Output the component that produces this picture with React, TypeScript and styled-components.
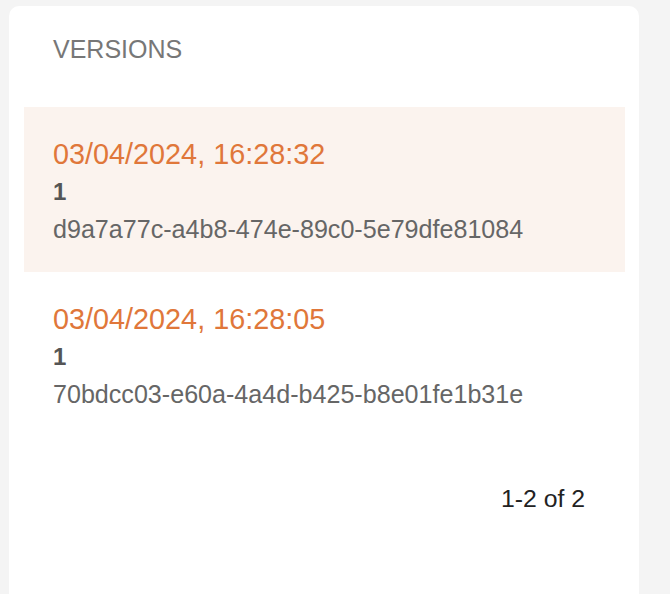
import { ReactElement } from 'react';
import styled, { createGlobalStyle } from 'styled-components';

interface Version {
  createdAt: string;
  number: number;
  id: string;
}

const versions: Version[] = [
  { createdAt: '03/04/2024, 16:28:32', number: 1, id: 'd9a7a77c-a4b8-474e-89c0-5e79dfe81084' },
  { createdAt: '03/04/2024, 16:28:05', number: 1, id: '70bdcc03-e60a-4a4d-b425-b8e01fe1b31e' },
];

const GlobalStyle = createGlobalStyle`
  html, body {
    margin: 0;
    background: #f4f4f4;
    font-family: "Liberation Sans", Arial, Helvetica, sans-serif;
    overflow: hidden;
  }
`;

const Page = styled.div`
  box-sizing: border-box;
  display: flex;
  height: 100vh;
  padding: 6px 0 0 9px;
`;
const Card = styled.div`
  background: #fff;
  border-radius: 10px 10px 0 0;
  box-sizing: border-box;
  padding: 28px 14px 0 15px;
  width: 630px;
`;
const Title = styled.div`
  color: #777;
  font-size: 25px;
  line-height: 30px;
  margin-bottom: 43px;
  padding-left: 29px;
`;
const List = styled.div`
  display: flex;
  flex-direction: column;
`;
const Row = styled.div<{ $active?: boolean }>`
  background: ${ (p) => (p.$active ? '#fbf3ee' : 'transparent') };
  box-sizing: border-box;
  display: flex;
  flex-direction: column;
  height: 165px;
  padding: 29px 29px 0;
`;
const Date = styled.div`
  color: #e0773a;
  font-size: 28.8px;
  line-height: 36px;
`;
const Number = styled.div`
  color: #555;
  font-size: 24px;
  font-weight: 700;
  line-height: 39px;
`;
const Id = styled.div`
  color: #666;
  font-size: 25.1px;
  line-height: 36px;
`;
const Pagination = styled.div`
  color: #222;
  display: flex;
  font-size: 24.8px;
  justify-content: flex-end;
  line-height: 30px;
  margin-top: 47px;
  padding-right: 40px;
`;

export default function App(): ReactElement {
  return (
    <Page>
      <GlobalStyle />
      <Card>
        <Title>VERSIONS</Title>
        <List>
          { versions.map((v, i) => (
            <Row key={ v.id } $active={ i === 0 }>
              <Date>{ v.createdAt }</Date>
              <Number>{ v.number }</Number>
              <Id>{ v.id }</Id>
            </Row>
          )) }
        </List>
        <Pagination>1-2 of 2</Pagination>
      </Card>
    </Page>
  );
}
